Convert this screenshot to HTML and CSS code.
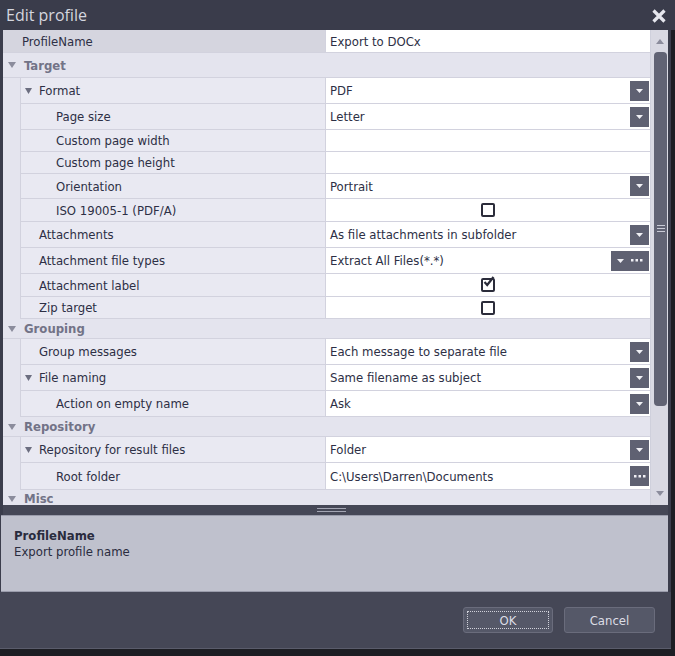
FILE: index.html
```html
<!DOCTYPE html>
<html>
<head>
<meta charset="utf-8">
<link rel="stylesheet" href="styles.css">
</head>
<body>
<div class="dialog">
  <div class="titlebar">
    <span class="title">Edit profile</span>
    <svg class="close" width="16" height="16" viewBox="0 0 16 16"><path d="M2.5 2.5 L13.5 13.5 M13.5 2.5 L2.5 13.5" stroke="#e6e7ee" stroke-width="3.2" stroke-linecap="butt"/></svg>
  </div>
  <div class="body">
    <div class="gridwrap">
      <div class="grid">
        <div class="row top sel h23"><div class="name">ProfileName</div><div class="value"><span class="txt">Export to DOCx</span></div></div>

        <div class="cat h25"><svg class="ctri" width="8" height="6" viewBox="0 0 8 6"><path d="M0 0 H8 L4 6 Z"/></svg>Target</div>
        <div class="row l1 h26"><div class="name"><svg class="rtri" width="7" height="6" viewBox="0 0 7 6"><path d="M0 0 H7 L3.5 6 Z"/></svg>Format</div><div class="value"><span class="txt">PDF</span><span class="btn"><svg width="7" height="4" viewBox="0 0 7 4"><path d="M0 0 H7 L3.5 4 Z"/></svg></span></div></div>
        <div class="row l2 h26"><div class="name">Page size</div><div class="value"><span class="txt">Letter</span><span class="btn"><svg width="7" height="4" viewBox="0 0 7 4"><path d="M0 0 H7 L3.5 4 Z"/></svg></span></div></div>
        <div class="row l2 h22"><div class="name">Custom page width</div><div class="value"></div></div>
        <div class="row l2 h22"><div class="name">Custom page height</div><div class="value"></div></div>
        <div class="row l2 h25"><div class="name">Orientation</div><div class="value"><span class="txt">Portrait</span><span class="btn"><svg width="7" height="4" viewBox="0 0 7 4"><path d="M0 0 H7 L3.5 4 Z"/></svg></span></div></div>
        <div class="row l2 h23"><div class="name">ISO 19005-1 (PDF/A)</div><div class="value center"><span class="chk"></span></div></div>
        <div class="row l1 h26"><div class="name">Attachments</div><div class="value"><span class="txt">As file attachments in subfolder</span><span class="btn"><svg width="7" height="4" viewBox="0 0 7 4"><path d="M0 0 H7 L3.5 4 Z"/></svg></span></div></div>
        <div class="row l1 h26"><div class="name">Attachment file types</div><div class="value"><span class="txt">Extract All Files(*.*)</span><span class="btn wide"><svg width="7" height="4" viewBox="0 0 7 4"><path d="M0 0 H7 L3.5 4 Z"/></svg><svg width="12" height="3" viewBox="0 0 12 3"><rect x="0" y="0" width="2.5" height="2.5"/><rect x="4.5" y="0" width="2.5" height="2.5"/><rect x="9" y="0" width="2.5" height="2.5"/></svg></span></div></div>
        <div class="row l1 h23"><div class="name">Attachment label</div><div class="value center"><span class="chk"><svg width="13" height="13" viewBox="0 0 13 13"><path d="M2.5 6 L5.2 9 L11.5 1" fill="none" stroke="#2b2c3a" stroke-width="2.2"/></svg></span></div></div>
        <div class="row l1 h22"><div class="name">Zip target</div><div class="value center"><span class="chk"></span></div></div>

        <div class="cat h20"><svg class="ctri" width="8" height="6" viewBox="0 0 8 6"><path d="M0 0 H8 L4 6 Z"/></svg>Grouping</div>
        <div class="row l1 h26"><div class="name">Group messages</div><div class="value"><span class="txt">Each message to separate file</span><span class="btn"><svg width="7" height="4" viewBox="0 0 7 4"><path d="M0 0 H7 L3.5 4 Z"/></svg></span></div></div>
        <div class="row l1 h26"><div class="name"><svg class="rtri" width="7" height="6" viewBox="0 0 7 6"><path d="M0 0 H7 L3.5 6 Z"/></svg>File naming</div><div class="value"><span class="txt">Same filename as subject</span><span class="btn"><svg width="7" height="4" viewBox="0 0 7 4"><path d="M0 0 H7 L3.5 4 Z"/></svg></span></div></div>
        <div class="row l2 h26"><div class="name">Action on empty name</div><div class="value"><span class="txt">Ask</span><span class="btn"><svg width="7" height="4" viewBox="0 0 7 4"><path d="M0 0 H7 L3.5 4 Z"/></svg></span></div></div>

        <div class="cat h20"><svg class="ctri" width="8" height="6" viewBox="0 0 8 6"><path d="M0 0 H8 L4 6 Z"/></svg>Repository</div>
        <div class="row l1 h26"><div class="name"><svg class="rtri" width="7" height="6" viewBox="0 0 7 6"><path d="M0 0 H7 L3.5 6 Z"/></svg>Repository for result files</div><div class="value"><span class="txt">Folder</span><span class="btn"><svg width="7" height="4" viewBox="0 0 7 4"><path d="M0 0 H7 L3.5 4 Z"/></svg></span></div></div>
        <div class="row l2 h27"><div class="name">Root folder</div><div class="value"><span class="txt">C:\Users\Darren\Documents</span><span class="btn"><svg width="12" height="3" viewBox="0 0 12 3"><rect x="0" y="0" width="2.5" height="2.5"/><rect x="4.5" y="0" width="2.5" height="2.5"/><rect x="9" y="0" width="2.5" height="2.5"/></svg></span></div></div>

        <div class="cat misc"><svg class="ctri" width="8" height="6" viewBox="0 0 8 6"><path d="M0 0 H8 L4 6 Z"/></svg>Misc</div>
      </div>
      <div class="scrollbar">
        <svg class="sarrow" width="8" height="5" viewBox="0 0 8 5"><path d="M0 5 H8 L4 0 Z"/></svg>
        <div class="track">
          <div class="thumb"><span class="grip"></span></div>
        </div>
        <svg class="sarrow" width="8" height="5" viewBox="0 0 8 5"><path d="M0 0 H8 L4 5 Z"/></svg>
      </div>
    </div>
    <div class="splitter"><span class="sgrip"></span></div>
    <div class="desc">
      <div class="dtitle">ProfileName</div>
      <div class="dtext">Export profile name</div>
    </div>
    <div class="footer">
      <button class="button ok"><span class="focus">OK</span></button>
      <button class="button">Cancel</button>
    </div>
  </div>
</div>
</body>
</html>
```
FILE: styles.css
```css
html, body {
  margin: 0;
  padding: 0;
  background: #1d1e24;
}
body {
  width: 675px;
  height: 656px;
  overflow: hidden;
  font-family: "DejaVu Sans Condensed", "DejaVu Sans", sans-serif;
  font-size: 13px;
  color: #2d2f45;
}
.dialog {
  width: 675px;
  height: 649px;
  display: flex;
  flex-direction: column;
}
.titlebar {
  height: 30px;
  background: #3a3c4b;
  display: flex;
  align-items: center;
  justify-content: space-between;
  padding: 0 8px 0 6px;
  box-sizing: border-box;
}
.title {
  font-family: "Open Sans", sans-serif;
  font-size: 16px;
  color: #d4d6df;
  margin-top: -1px;
}
.close { margin-top: 1px; }
.body {
  width: 671px;
  flex: 1;
  display: flex;
  flex-direction: column;
  background: #3b3d4c;
  padding: 0 3px 0 3px;
  box-sizing: border-box;
  border-bottom: 1px solid #5a5c6b;
}
.gridwrap {
  height: 475px;
  display: flex;
  background: #e4e4ee;
  overflow: hidden;
}
.grid {
  flex: 1;
  display: flex;
  flex-direction: column;
  overflow: hidden;
}
.row {
  display: flex;
  flex: none;
  box-sizing: border-box;
}
.h20 { height: 20px; }
.h22 { height: 22px; }
.h23 { height: 23px; }
.h25 { height: 25px; }
.h26 { height: 26px; }
.h27 { height: 27px; }
.row.l1, .row.l2 { padding-left: 17px; }
.name {
  width: 306px;
  flex: none;
  display: flex;
  align-items: center;
  background: #e9e9f2;
  border-left: 1px solid #d2d2de;
  border-bottom: 1px solid #d2d2de;
  border-right: 1px solid #d2d2de;
  box-sizing: border-box;
  white-space: nowrap;
}
.row.top .name {
  width: 323px;
  padding-left: 19px;
  border-left: none;
}
.row.sel .name { background: #d5d5df; }
.row.l1 .name { padding-left: 18px; }
.row.l2 .name { padding-left: 35px; }
.rtri {
  fill: #6c6e80;
  margin-left: -14px;
  margin-right: 7px;
}
.value {
  flex: 1;
  background: #fff;
  border-bottom: 1px solid #d2d2de;
  display: flex;
  align-items: center;
  padding-left: 4px;
  padding-right: 1px;
  box-sizing: border-box;
  white-space: nowrap;
}
.value .txt { flex: 1; }
.value.center { justify-content: center; padding-left: 0; }
.btn {
  width: 19px;
  height: 20px;
  background: #5f6172;
  display: flex;
  align-items: center;
  justify-content: center;
  fill: #f0f0f5;
}
.btn.wide {
  width: 38px;
  justify-content: space-around;
  padding: 0 2px;
  box-sizing: border-box;
}
.chk {
  width: 14px;
  height: 14px;
  border: 2px solid #2b2c3a;
  border-radius: 2px;
  box-sizing: border-box;
  position: relative;
  margin-left: 1px;
}
.chk svg {
  position: absolute;
  left: -1px;
  top: -4px;
}
.cat {
  flex: none;
  display: flex;
  align-items: center;
  padding-left: 5px;
  font-weight: bold;
  color: #727387;
  border-bottom: 1px solid #d2d2de;
  box-sizing: border-box;
  background: #e4e4ee;
}
.cat.misc {
  height: 20px;
  align-items: flex-start;
  padding-top: 1px;
}
.cat.misc .ctri { margin-top: 5px; }
.ctri {
  fill: #8b8c9c;
  margin-right: 8px;
}
.scrollbar {
  width: 18px;
  flex: none;
  background: #d9d9e3;
  border-left: 1px solid #cfd0dc;
  box-sizing: border-box;
  display: flex;
  flex-direction: column;
  align-items: center;
  fill: #8b8c9c;
}
.sarrow { margin: 9px 0 8px; }
.sarrow:last-child { margin: 6px 0 9px; }
.track {
  flex: 1;
  width: 100%;
  display: flex;
  justify-content: flex-end;
}
.thumb {
  width: 13px;
  height: 354px;
  background: #616374;
  border-radius: 4px;
  display: flex;
  justify-content: center;
  margin-right: 1px;
}
.grip {
  width: 8px;
  height: 5px;
  margin-top: 173px;
  border-top: 1px solid #c9cad6;
  border-bottom: 1px solid #c9cad6;
  position: relative;
}
.grip::after {
  content: "";
  position: absolute;
  left: 0;
  right: 0;
  top: 2px;
  border-top: 1px solid #c9cad6;
}
.splitter {
  height: 10px;
  background: #454756;
  display: flex;
  justify-content: center;
  align-items: center;
}
.sgrip {
  width: 29px;
  height: 2px;
  border-top: 1px solid #a3a5b3;
  border-bottom: 1px solid #a3a5b3;
  margin-left: -8px;
}
.desc {
  height: 77px;
  background: #bfc1cd;
  border-top: 1px solid #9a9cab;
  border-bottom: 1px solid #9a9cab;
  box-sizing: border-box;
  padding: 12px 12px;
  color: #2a2c3e;
  margin-left: -2px;
}
.dtitle { font-weight: bold; line-height: 16px; padding-left: 1px; }
.dtext { line-height: 16px; padding-left: 1px; }
.footer {
  flex: 1;
  background: #454756;
  display: flex;
  justify-content: flex-end;
  align-items: flex-start;
  gap: 11px;
  padding: 15px 16px 0 0;
  margin-left: -3px;
  margin-right: -3px;
}
.button {
  width: 91px;
  height: 26px;
  background: #555868;
  border: 1px solid #6a6c7c;
  border-radius: 3px;
  color: #dcdde5;
  font-family: "DejaVu Sans Condensed", "DejaVu Sans", sans-serif;
  font-size: 13px;
  padding: 3px;
  box-sizing: border-box;
  display: flex;
  align-items: center;
  justify-content: center;
}
.button.ok { width: 90px; }
.focus {
  flex: 1;
  align-self: stretch;
  display: flex;
  align-items: center;
  justify-content: center;
  border: 1px dotted #d0d1da;
}
```
